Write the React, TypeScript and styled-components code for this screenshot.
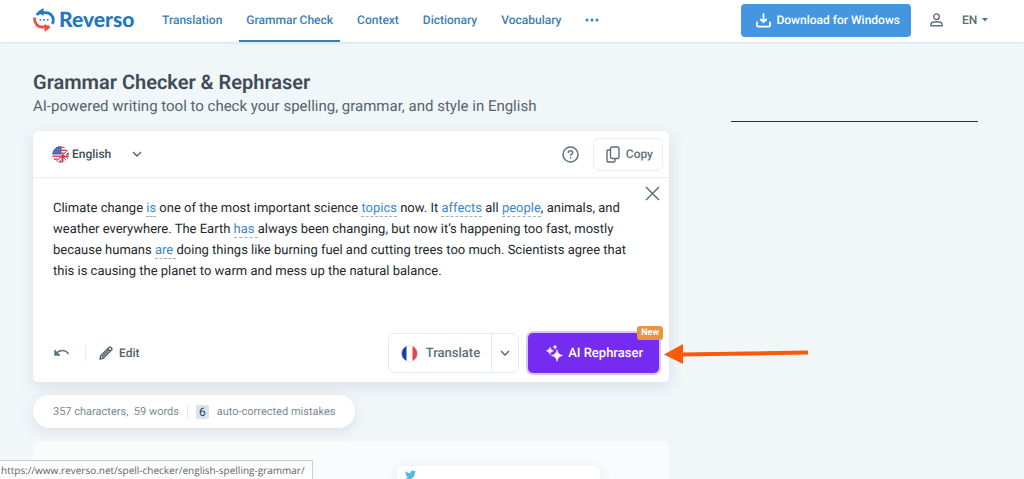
import React from "react";
import styled, { createGlobalStyle, css } from "styled-components";

const GlobalStyle = createGlobalStyle`
  *, *::before, *::after { box-sizing: border-box; }
  body {
    margin: 0;
    background: #f1f6f9;
    color: #3f4c55;
    font-family: Roboto, "Liberation Sans", sans-serif;
    font-size: 12px;
    text-rendering: geometricPrecision;
  }
  button, select { font: inherit; color: inherit; cursor: pointer; text-rendering: inherit; }
  h1, p { margin: 0; }
  svg { display: block; flex: none; }
`;

const Page = styled.div`
  display: flex;
  flex-direction: column;
  min-height: 100vh;
`;

const Header = styled.header`
  display: flex;
  align-items: center;
  height: 42px;
  padding: 0 36px 2px 33px;
  background: #fff;
  box-shadow: 0 1px 2px rgba(60, 90, 110, 0.12);
`;

const Logo = styled.a`
  display: flex;
  align-items: center;
  gap: 4px;
  width: 122px;
  color: #2277c4;
  font: 900 21px/24px Lato, sans-serif;
  text-decoration: none;
`;

const Nav = styled.nav`
  display: flex;
  align-self: stretch;
  gap: 10px;
`;

const navItem = css`
  display: flex;
  align-items: center;
  padding: 0 7px;
  border: 0;
  background: none;
  color: #3a80b8;
  font-weight: 500;
  line-height: 16px;
`;

const NavLink = styled.a<{ $active?: boolean }>`
  ${navItem}
  text-decoration: none;
  box-shadow: ${(p) => (p.$active ? "0 2px 0 #3a80b8" : "none")};
`;

const MoreButton = styled.button`
  ${navItem}
`;

const HeaderTools = styled.div`
  display: flex;
  align-items: center;
  gap: 19px;
  margin-left: auto;
  color: #5c6f7a;
`;

const DownloadButton = styled.button`
  display: flex;
  align-items: center;
  gap: 5px;
  height: 33px;
  padding: 0 11px 0 15px;
  border: 0;
  border-radius: 4px;
  background: #4596e0;
  color: #fff;
  font-weight: 500;
`;

const IconButton = styled.button`
  display: flex;
  padding: 0;
  border: 0;
  background: none;
  color: #5c7480;
`;

const SelectWrap = styled.label<{ $gap: number }>`
  display: flex;
  align-items: center;
  gap: ${(p) => p.$gap}px;
`;

const PlainSelect = styled.select`
  appearance: none;
  padding: 0;
  border: 0;
  background: none;
  font-weight: 500;
  line-height: 16px;
`;

const Main = styled.main`
  display: grid;
  flex: 1;
  grid-template-columns: minmax(0, 1fr) 247px;
  gap: 62px;
  padding: 28px 46px 0 33px;
`;

const Column = styled.div`
  display: flex;
  flex-direction: column;
`;

const Title = styled.h1`
  color: #3f4c55;
  font-size: 20px;
  font-weight: 600;
  line-height: 24px;
`;

const Subtitle = styled.p`
  margin-bottom: 13px;
  color: #55646d;
  font-size: 15px;
  line-height: 24px;
`;

const Editor = styled.section`
  display: flex;
  flex-direction: column;
  border-radius: 5px;
  background: #fff;
  box-shadow: 0 4px 16px rgba(50, 80, 105, 0.13);
`;

const Toolbar = styled.div`
  display: flex;
  align-items: center;
  justify-content: space-between;
  height: 47px;
  padding: 0 6px 0 19px;
  border-bottom: 1px solid #eaeef1;
`;

const Group = styled.div<{ $gap: number }>`
  display: flex;
  align-items: center;
  gap: ${(p) => p.$gap}px;
`;

const OutlineButton = styled.button`
  display: flex;
  align-items: center;
  gap: 6px;
  height: 33px;
  padding: 0 9px 0 12px;
  border: 1px solid #e9eef1;
  border-radius: 6px;
  background: #fff;
  color: #5c6f7a;
  font-weight: 500;
`;

const TextArea = styled.div`
  display: flex;
  align-items: flex-start;
  min-height: 146px;
  padding: 8px 9px 0 20px;
`;

const Content = styled.div`
  flex: 1;
  padding-top: 12px;
  outline: 0;
  color: #24292e;
  font-size: 13px;
  line-height: 21px;
`;

const Hint = styled.span`
  border-bottom: 1px dashed #a3b0b8;
  color: #3c86c8;
`;

const Footer = styled.div`
  display: flex;
  align-items: flex-start;
  justify-content: space-between;
  padding: 9px 10px 9px 20px;
`;

const EditButton = styled.button`
  display: flex;
  align-items: center;
  gap: 6px;
  padding: 0 0 0 13px;
  border: 0;
  border-left: 1px solid #eaeef1;
  background: none;
  color: #4f626d;
  font-weight: 500;
  line-height: 16px;
`;

const SplitButton = styled.div`
  display: flex;
  height: 40px;
  border: 1px solid #e6ebef;
  border-radius: 6px;
`;

const SplitPart = styled.button`
  display: flex;
  align-items: center;
  gap: 8px;
  padding: 0 11px 0 12px;
  border: 0;
  background: none;
  color: #5c6f7a;
  font-size: 13px;
  font-weight: 500;

  & + & {
    padding: 0 8px;
    border-left: 1px solid #e6ebef;
  }
`;

const RephraseButton = styled.button`
  position: relative;
  display: flex;
  align-items: center;
  gap: 5px;
  height: 40px;
  padding: 0 16px 0 18px;
  border: 0;
  border-radius: 5px;
  background: #752bf0;
  box-shadow: 0 0 0 2px #d9c6fb;
  color: #fff;
  font-size: 13px;
  font-weight: 500;
`;

const Badge = styled.span`
  position: absolute;
  top: -7px;
  right: -4px;
  padding: 0 4px;
  border-radius: 3px;
  background: #e8963d;
  font-size: 9px;
  font-weight: 700;
  line-height: 14px;
`;

const Stats = styled.div`
  display: flex;
  align-items: center;
  align-self: flex-start;
  gap: 8px;
  height: 33px;
  margin: 13px 0;
  padding: 0 20px;
  border-radius: 17px;
  background: #fff;
  box-shadow: 0 4px 14px rgba(50, 80, 105, 0.12);
  color: #7b8a93;
  font-size: 11px;
`;

const Count = styled.span`
  padding: 0 3px;
  border-radius: 2px;
  background: #d6e5f3;
  color: #2e4250;
  font-size: 12px;
  line-height: 14px;
`;

const Divider = styled.span`
  width: 1px;
  height: 15px;
  background: #e6ebef;
`;

const Promo = styled.section`
  display: flex;
  flex: 1;
  justify-content: flex-end;
  min-height: 38px;
  padding: 25px 69px 0;
  border-radius: 6px 6px 0 0;
  background: #fafbfd;
`;

const PromoCard = styled.div`
  width: 203px;
  padding: 4px 8px 0;
  border-radius: 6px 6px 0 0;
  background: #fff;
  box-shadow: 0 2px 14px rgba(50, 80, 105, 0.12);
`;

const Rule = styled.hr`
  width: 100%;
  height: 1px;
  margin: 51px 0 0;
  border: 0;
  background: #2c3236;
`;

const StatusUrl = styled.div`
  position: fixed;
  bottom: 0;
  left: 0;
  padding: 0 7px 0 1px;
  border: 1px solid #c9cdd0;
  border-width: 1px 1px 0 0;
  background: #fdfdfd;
  color: #5f6468;
  font: 10px/18px "Open Sans", sans-serif;
`;

const Pointer = styled.svg`
  position: absolute;
  top: 10px;
  left: calc(100% + 4px);
  pointer-events: none;
`;

const RephraseWrap = styled.div`
  position: relative;
`;

const LogoMark = () => (
  <svg width="22" height="24" viewBox="0 0 22 24" fill="none">
    <path d="M3.500 6.800C5 5.200 7 4.700 9 4.700h3.500c4.500 0 7.800 3.200 7.800 7.300 0 1.600-.4 2.900-1 3.900" stroke="#2277c4" strokeWidth="2.800" />
    <path d="M10.500 0v8L4.500 3.800z" fill="#2277c4" />
    <path d="M1.700 9.500C.9 15 4.500 19 9.500 19H13c1.200 0 2.300-.3 3.300-.9" stroke="#e8504a" strokeWidth="2.800" />
    <path d="M11.500 16v8l6-4.500z" fill="#e8504a" />
    <path d="M7.300 11.800h.1M11 11.800h.1M14.700 11.800h.1" stroke="#2277c4" strokeWidth="1.800" strokeLinecap="round" />
  </svg>
);

const Chevron = () => (
  <svg width="10" height="10" viewBox="0 0 10 10" fill="none" stroke="#4f626d" strokeWidth="1.400">
    <path d="M1 3l4 4 4-4" />
  </svg>
);

/* Stars and stripes on the upper left, Union Jack on the lower right */
const EnglishFlag = () => (
  <svg width="17" height="17" viewBox="0 0 17 17">
    <clipPath id="en"><circle cx="8.500" cy="8.500" r="8.300" /></clipPath>
    <clipPath id="en-uk"><path d="M17 2v15H2z" /></clipPath>
    <g clipPath="url(#en)">
      <path d="M0 0h17v17H0z" fill="#fff" />
      <path d="M0 1.200h17M0 4.200h17M0 7.200h17M0 10.200h17M0 13.200h17" stroke="#e0455c" strokeWidth="1.500" />
      <path d="M0 0h9.500v8.500H0z" fill="#4a62a8" />
      <path d="M2.500 3.500h6M2.500 6h5" stroke="#9fb0d8" strokeWidth=".8" strokeDasharray="1 1.200" />
      <g clipPath="url(#en-uk)">
        <path d="M0 0h17v17H0z" fill="#3c4fa0" />
        <path d="M3 3l14 14M17 3L3 17M10.500 0v17M0 10.500h17" stroke="#fff" strokeWidth="3.400" />
        <path d="M3 3l14 14M17 3L3 17" stroke="#e0455c" strokeWidth="1" />
        <path d="M10.500 0v17M0 10.500h17" stroke="#dc3049" strokeWidth="2" />
      </g>
    </g>
  </svg>
);

const FrenchFlag = () => (
  <svg width="17" height="17" viewBox="0 0 17 17">
    <clipPath id="fr"><circle cx="8.500" cy="8.500" r="8" /></clipPath>
    <g clipPath="url(#fr)">
      <path d="M0 0h17v17H0z" fill="#fff" />
      <path d="M0 0h5.500v17H0z" fill="#2438a8" />
      <path d="M11.500 0H17v17h-5.500z" fill="#e8404f" />
    </g>
    <circle cx="8.500" cy="8.500" r="8" fill="none" stroke="#d4d9e2" strokeWidth=".6" />
  </svg>
);

export default function App() {
  return (
    <Page>
      <GlobalStyle />
      <Header>
        <Logo href="#"><LogoMark />Reverso</Logo>
        <Nav>
          <NavLink href="#">Translation</NavLink>
          <NavLink href="#" $active>Grammar Check</NavLink>
          <NavLink href="#">Context</NavLink>
          <NavLink href="#">Dictionary</NavLink>
          <NavLink href="#">Vocabulary</NavLink>
          <MoreButton aria-label="More">
            <svg width="14" height="4" viewBox="0 0 14 4" fill="currentColor">
              <circle cx="2" cy="2" r="1.500" /><circle cx="7" cy="2" r="1.500" /><circle cx="12" cy="2" r="1.500" />
            </svg>
          </MoreButton>
        </Nav>
        <HeaderTools>
          <DownloadButton>
            <svg width="15" height="15" viewBox="0 0 15 15" fill="none" stroke="#fff" strokeWidth="1.800" strokeLinecap="round" strokeLinejoin="round">
              <path d="M7.500 1v8M4.800 6.500l2.700 2.700 2.700-2.700M1 9.500v3c0 .8.400 1.200 1.200 1.200h10.600c.8 0 1.200-.4 1.200-1.200v-3" />
            </svg>
            Download for Windows
          </DownloadButton>
          <IconButton aria-label="Account">
            <svg width="13" height="14" viewBox="0 0 13 14" fill="none" stroke="currentColor" strokeWidth="1.400">
              <circle cx="6.500" cy="3.700" r="2.800" />
              <path d="M.8 12.800v-1.300C.8 9.500 4 8.800 6.500 8.800s5.700.7 5.700 2.700v1.300z" strokeLinejoin="round" />
            </svg>
          </IconButton>
          <SelectWrap $gap={4}>
            <PlainSelect aria-label="Interface language"><option>EN</option></PlainSelect>
            <svg width="6" height="4" viewBox="0 0 6 4" fill="currentColor"><path d="M0 0h6L3 3.500z" /></svg>
          </SelectWrap>
        </HeaderTools>
      </Header>

      <Main>
        <Column>
          <Title>Grammar Checker &amp; Rephraser</Title>
          <Subtitle>AI-powered writing tool to check your spelling, grammar, and style in English</Subtitle>

          <Editor>
            <Toolbar>
              <Group $gap={3}>
                <EnglishFlag />
                <SelectWrap $gap={20}>
                  <PlainSelect aria-label="Text language"><option>English</option></PlainSelect>
                  <Chevron />
                </SelectWrap>
              </Group>
              <Group $gap={14}>
                <IconButton aria-label="Help">
                  <svg width="17" height="17" viewBox="0 0 17 17" fill="none" stroke="currentColor" strokeWidth="1.500">
                    <circle cx="8.500" cy="8.500" r="7.500" />
                    <path d="M6.300 7c0-1.300.9-2.200 2.200-2.200s2.200.8 2.200 1.900c0 1.400-2.200 1.600-2.200 3M8.500 11v1.500" />
                  </svg>
                </IconButton>
                <OutlineButton>
                  <svg width="14" height="17" viewBox="0 0 14 17" fill="none" stroke="currentColor" strokeWidth="1.400">
                    <rect x="4.500" y="1" width="8.500" height="11.500" rx="1.500" />
                    <path d="M4.500 4H2.200C1.500 4 1 4.500 1 5.200v9.600c0 .7.500 1.200 1.200 1.200h5.600c.7 0 1.200-.5 1.200-1.200v-2.300" />
                  </svg>
                  Copy
                </OutlineButton>
              </Group>
            </Toolbar>

            <TextArea>
              <Content role="textbox" aria-multiline="true" aria-label="Text to check">
                Climate change <Hint>is</Hint> one of the most important science <Hint>topics</Hint> now. It{" "}
                <Hint>affects</Hint> all <Hint>people</Hint>, animals, and weather everywhere. The Earth{" "}
                <Hint>has </Hint>always been changing, but now it’s happening too fast, mostly because humans{" "}
                <Hint>are </Hint>doing things like burning fuel and cutting trees too much. Scientists agree that this
                is causing the planet to warm and mess up the natural balance.
              </Content>
              <IconButton aria-label="Clear text">
                <svg width="15" height="15" viewBox="0 0 15 15" fill="none" stroke="currentColor" strokeWidth="1.500">
                  <path d="M1 1l13 13M14 1L1 14" />
                </svg>
              </IconButton>
            </TextArea>

            <Footer>
              <Group $gap={15}>
                <IconButton aria-label="Undo">
                  <svg width="17" height="40" viewBox="0 0 17 40" fill="none" stroke="currentColor" strokeWidth="1.500">
                    <path d="M3 20.500c3.500-4 9.500-4.500 12.500.5" />
                    <path d="M2 17v5h5" fill="currentColor" />
                  </svg>
                </IconButton>
                <EditButton>
                  <svg width="14" height="14" viewBox="0 0 14 14" fill="none" stroke="currentColor" strokeWidth="1.400" strokeLinejoin="round">
                    <path d="M1 13l.7-3.200L10.200 1.300c.4-.4 1-.4 1.400 0l1.100 1.100c.4.4.4 1 0 1.400L4.200 12.300zM8.700 2.800l2.500 2.500M3 11L9.700 4.300" />
                  </svg>
                  Edit
                </EditButton>
              </Group>
              <Group $gap={9}>
                <SplitButton>
                  <SplitPart><FrenchFlag />Translate</SplitPart>
                  <SplitPart aria-label="Choose target language"><Chevron /></SplitPart>
                </SplitButton>
                <RephraseWrap>
                  <RephraseButton>
                    <svg width="17" height="17" viewBox="0 0 17 17" fill="#fff">
                      <path d="M11 4.500q.5 5 5.700 6-5.200 1-5.700 6-.5-5-5.700-6 5.200-1 5.700-6zM4 2q.4 3.200 3.700 3.800Q4.400 6.400 4 9.600 3.600 6.400.3 5.800 3.600 5.200 4 2zM9 0q.2 1.800 2 2-1.800.2-2 2-.2-1.800-2-2 1.800-.2 2-2z" stroke="#fff" strokeWidth=".5" />
                    </svg>
                    AI Rephraser
                    <Badge>New</Badge>
                  </RephraseButton>
                  <Pointer width="146" height="22" viewBox="0 0 146 22">
                    <path d="M18 11.500L145 9.500" stroke="#fa5a0c" strokeWidth="4" />
                    <path d="M1 11.500L20 1v20z" fill="#fa5a0c" />
                  </Pointer>
                </RephraseWrap>
              </Group>
            </Footer>
          </Editor>

          <Stats>
            <span>357 characters,&nbsp; 59 words</span>
            <Divider />
            <Count>6</Count>
            <span>auto-corrected mistakes</span>
          </Stats>

          <Promo>
            <PromoCard>
              <svg width="11" height="10" viewBox="0 0 24 20" fill="#55b9e6">
                <path d="M24 2.400a10 10 0 0 1-2.800.8A5 5 0 0 0 23.300.5a10 10 0 0 1-3.100 1.200A4.900 4.900 0 0 0 11.800 6.200 14 14 0 0 1 1.700 1a4.900 4.900 0 0 0 1.500 6.600A5 5 0 0 1 1 7a4.900 4.900 0 0 0 3.900 4.900 5 5 0 0 1-2.200.1 4.900 4.900 0 0 0 4.600 3.400A9.900 9.900 0 0 1 0 17.500 14 14 0 0 0 21.500 5a10 10 0 0 0 2.500-2.600z" />
              </svg>
            </PromoCard>
          </Promo>
        </Column>
        <aside><Rule /></aside>
      </Main>
      <StatusUrl>https://www.reverso.net/spell-checker/english-spelling-grammar/</StatusUrl>
    </Page>
  );
}
